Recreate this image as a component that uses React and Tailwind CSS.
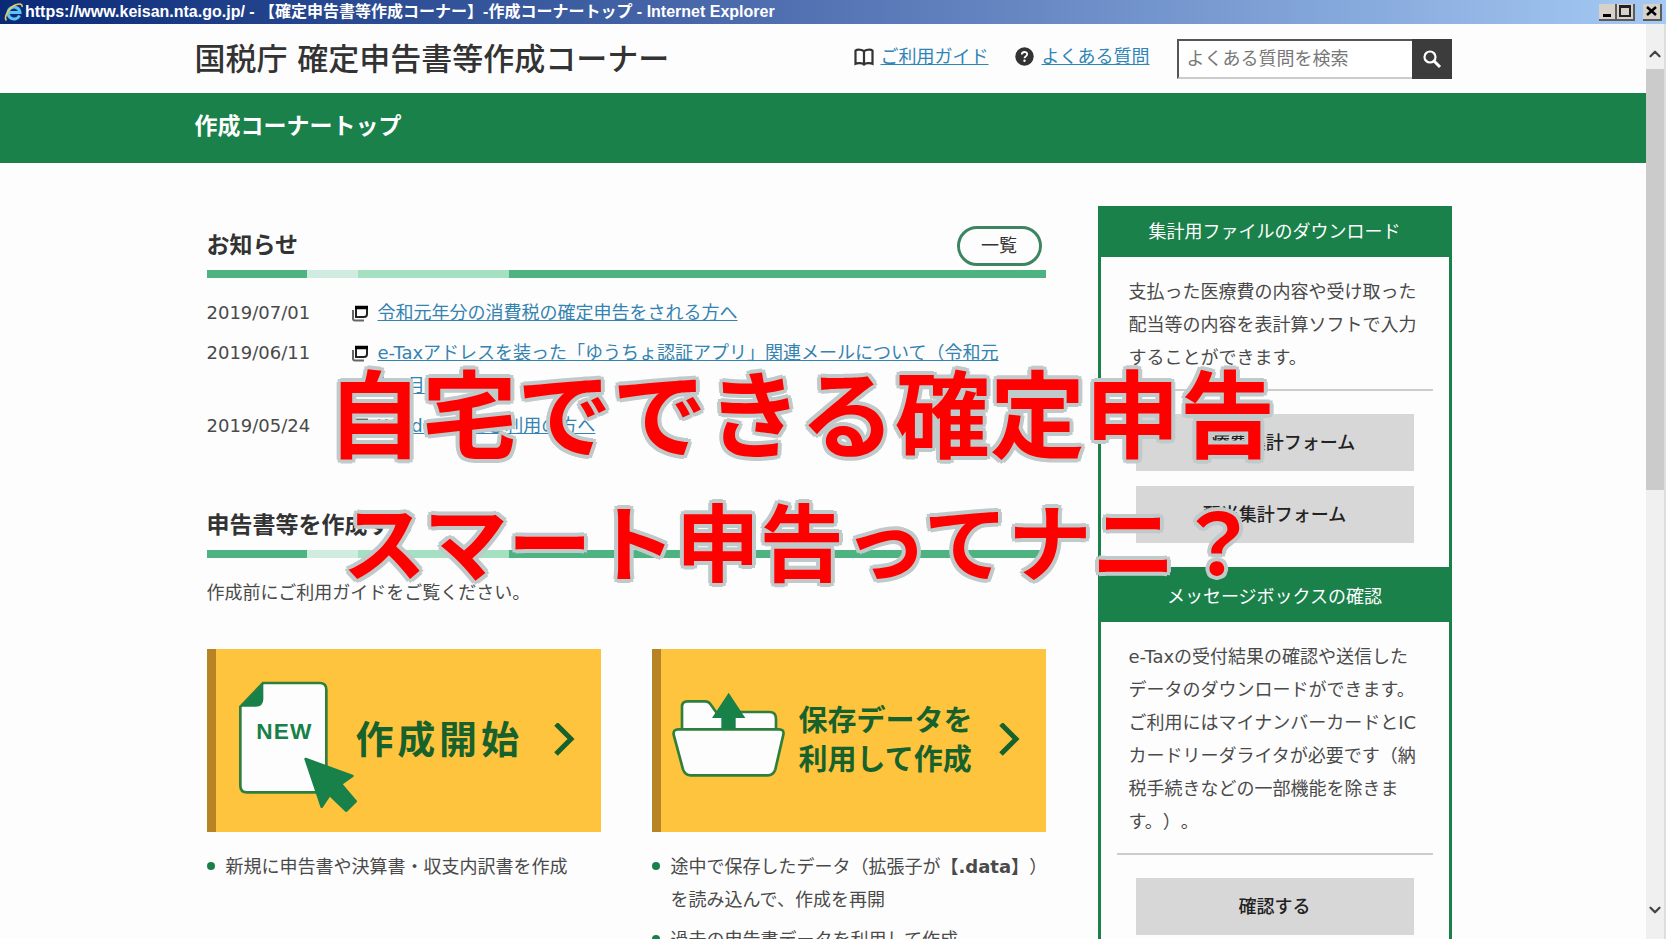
import React from 'react';
import { ChevronUp, ChevronDown } from 'lucide-react';

const news = [
    { date: '2019/07/01', title: '令和元年分の消費税の確定申告をされる方へ' },
    { date: '2019/06/11', title: 'e-Taxアドレスを装った「ゆうちょ認証アプリ」関連メールについて（令和元年6月）' },
    { date: '2019/05/24', title: 'Windows7をご利用の方へ' },
];

const IeIcon = () => (
    <svg width="20" height="20" viewBox="0 0 20 20" fill="none" aria-hidden="true">
        <path d="M15.5 13.5A6 6 0 1 1 16 10.500H5" stroke="#5cc3f5" strokeWidth="3" />
        <path d="M2.500 18.500C-1 15 6 4.500 12.500 2.500C16 1.300 18.500 2 18 5" stroke="#f2cf4a" strokeWidth="1.600" />
    </svg>
);

const BookIcon = () => (
    <svg width="20" height="18" viewBox="0 0 20 18" fill="none" stroke="#333" strokeWidth="2.200" aria-hidden="true">
        <path d="M10 3.500C9 1.300 3 1.300 1.500 2.500V15.800C3.500 14.800 8.500 14.800 10 16.500C11.500 14.800 16.500 14.800 18.500 15.800V2.500C17 1.300 11 1.300 10 3.500ZM10 4V16" />
    </svg>
);

const QuestionIcon = () => (
    <svg width="19" height="19" viewBox="0 0 19 19" aria-hidden="true">
        <circle cx="9.500" cy="9.500" r="9.200" fill="#333" />
        <path d="M6.800 7.500C6.800 4.200 12.200 4.200 12.200 7.300C12.200 9.300 9.500 9 9.500 11.300" fill="none" stroke="#fff" strokeWidth="1.800" />
        <circle cx="9.500" cy="13.800" r="1.200" fill="#fff" />
    </svg>
);

const SearchIcon = () => (
    <svg width="20" height="20" viewBox="0 0 20 20" fill="none" stroke="#fff" aria-hidden="true">
        <circle cx="8" cy="8" r="5.500" strokeWidth="2.200" />
        <path d="M12 12L18 18" strokeWidth="3" />
    </svg>
);

const WindowIcon = () => (
    <svg className="mt-[9px] shrink-0" width="18" height="17" viewBox="0 0 18 17" fill="none" aria-hidden="true">
        <path d="M2 5V13.500Q2 15.500 4 15.500H13" stroke="#666" strokeWidth="2" />
        <path d="M5 2.500H16V9Q16 12 13 12H5Z" stroke="#222" strokeWidth="2" />
        <path d="M4 2.500H17" stroke="#000" strokeWidth="3.500" />
    </svg>
);

const NewDocumentIcon = () => (
    <svg className="shrink-0 overflow-visible" width="110" height="146" viewBox="145 112 330 438" aria-hidden="true">
        <path d="M220 157H390Q410 157 410 177V465Q410 485 390 485H172Q152 485 152 465V228Z" fill="#fdfdfd" stroke="#2f7f3c" strokeWidth="8" />
        <path d="M221 160V205Q221 228 198 228H152Z" fill="#188049" />
        <text x="284" y="326" textAnchor="middle" fontSize="68" fontWeight="700" fill="#188049" className="font-['Liberation_Sans',sans-serif] tracking-wider">NEW</text>
        <path d="M348 385L488 436L454 460L498 512L470 540L420 492L396 528Z" fill="#188049" stroke="#188049" strokeWidth="8" strokeLinejoin="round" />
    </svg>
);

const FolderIcon = () => (
    <svg className="shrink-0" width="115" height="97" viewBox="120 186 345 291" aria-hidden="true">
        <path d="M153 300V230Q153 214 169 214H222Q232 214 238 222L255 246H415Q435 246 435 266V300Z" fill="#fdfdfd" stroke="#2f7f3c" strokeWidth="8" />
        <path d="M142 298H444Q460 298 457 314L433 418Q427 436 410 436H180Q162 436 156 418L128 314Q126 298 142 298Z" fill="#fdfdfd" stroke="#2f7f3c" strokeWidth="8" />
        <path d="M293 188L343 264H314V298H271V264H243Z" fill="#188049" />
    </svg>
);

const ArrowIcon = () => (
    <svg className="ml-auto shrink-0" width="22" height="36" viewBox="0 0 22 36" fill="none" aria-hidden="true">
        <path d="M3 1L18 16L3 31" stroke="#17612c" strokeWidth="5" />
    </svg>
);

const SectionHeading = ({ title, children }) => (
    <div>
        <div className="flex h-10 items-center justify-between pr-1">
            <h2 className="text-[23px] font-bold text-[#333]">{title}</h2>
            {children}
        </div>
        <div className="mt-1 flex h-2">
            <span className="w-[12%] bg-[#4db380]" />
            <span className="w-[6%] bg-[#d0ebdf]" />
            <span className="w-[18%] bg-[#a6e0c2]" />
            <span className="flex-1 bg-[#4db380]" />
        </div>
    </div>
);

const Bullet = ({ children }) => (
    <li className="flex gap-[11px]">
        <span className="mt-3 size-2 shrink-0 rounded-full bg-[#188049]" />
        <span>{children}</span>
    </li>
);

const SideBox = ({ title, text, buttons }) => (
    <section className="border-x-3 border-b-4 border-[#1a814a]">
        <h2 className="bg-[#1a814a] py-[9px] text-center text-lg leading-[33px] text-white">{title}</h2>
        <p className="px-7 pt-[18px] leading-[33px]">{text}</p>
        <hr className="mx-4 mt-[15px] border-t-2 border-[#ccc]" />
        <div className="flex flex-col gap-[15px] px-[35px] pt-[23px] pb-6">
            {buttons.map((label) => (
                <button key={label} type="button" className="h-[57px] bg-[#d7d7d7] font-medium text-[#222]">
                    {label}
                </button>
            ))}
        </div>
    </section>
);

const TitleBar = () => (
    <div className="flex h-6 shrink-0 items-center bg-linear-to-r from-[#0a2a78] via-[#5574b4] to-[#a6caf4] pr-1 pl-1">
        <IeIcon />
        <span className="ml-px font-['Liberation_Sans','Noto_Sans_CJK_JP',sans-serif] text-base font-bold whitespace-nowrap text-white">
            https://www.keisan.nta.go.jp/ - 【確定申告書等作成コーナー】-作成コーナートップ - Internet Explorer
        </span>
        <div className="ml-auto flex">
            <button type="button" aria-label="最小化" className="flex h-[17px] w-[18px] items-end justify-center border-r-2 border-b-2 border-[#5c5c5c] bg-[#d6d2ca] pb-0.5">
                <span className="h-[3px] w-2 bg-black" />
            </button>
            <button type="button" aria-label="最大化" className="flex h-[17px] w-[18px] items-center justify-center border-r-2 border-b-2 border-[#5c5c5c] bg-[#d6d2ca]">
                <span className="h-3 w-3 border-2 border-t-3 border-[#222]" />
            </button>
            <button type="button" aria-label="閉じる" className="ml-2 flex h-[17px] w-[19px] items-center justify-center border-r-2 border-b-2 border-[#5c5c5c] bg-[#d6d2ca]">
                <svg width="11" height="10" viewBox="0 0 11 10" stroke="#000" strokeWidth="2.500" aria-hidden="true">
                    <path d="M1 1L10 9M10 1L1 9" />
                </svg>
            </button>
        </div>
    </div>
);

const Header = () => (
    <header className="mx-auto flex h-[69px] w-full max-w-[1257px] items-center">
        <h1 className="pt-0.5 text-[31px] font-medium whitespace-nowrap text-[#333]">国税庁 確定申告書等作成コーナー</h1>
        <nav className="ml-auto flex items-center gap-[26px] pb-1 text-[#2f85b5]">
            <span className="flex items-center gap-[7px]">
                <BookIcon />
                <a href="#guide" className="underline">ご利用ガイド</a>
            </span>
            <span className="flex items-center gap-2">
                <QuestionIcon />
                <a href="#faq" className="underline">よくある質問</a>
            </span>
        </nav>
        <form className="ml-[27px] flex">
            <input
                type="text"
                aria-label="よくある質問を検索"
                placeholder="よくある質問を検索"
                className="h-10 w-[235px] border-2 border-r-0 border-t-[#555] border-b-[#ccc] border-l-[#555] bg-white px-2 placeholder:text-[#777]"
            />
            <button type="submit" aria-label="検索" className="flex h-10 w-10 items-center justify-center bg-[#3c3c3c]">
                <SearchIcon />
            </button>
        </form>
    </header>
);

const App = () => {
    return (
        <div className="relative flex h-screen flex-col overflow-hidden bg-[#fdfdfd] font-['DejaVu_Sans','Noto_Sans_CJK_JP',sans-serif] text-lg text-[#4a4a4a] [text-spacing-trim:space-all]" lang="ja">
            <TitleBar />
            <div className="flex min-h-0 flex-1">
                <div className="min-w-0 flex-1 overflow-hidden">
                    <Header />
                    <div className="bg-[#1a814a]">
                        <p className="mx-auto max-w-[1257px] pt-[13px] pb-[17px] text-[23px] leading-10 font-bold text-white">作成コーナートップ</p>
                    </div>

                    <div className="mx-auto flex max-w-[1257px] items-start pt-[43px]">
                        <main className="min-w-0 flex-1 pt-5 pr-[52px] pl-3">
                            <SectionHeading title="お知らせ">
                                <a href="#news" className="flex h-10 w-[85px] items-center justify-center rounded-full border-3 border-[#3c8560] text-[#333]">
                                    一覧
                                </a>
                            </SectionHeading>
                            <ul className="mt-[18px] flex flex-col gap-[7px] leading-[33px]">
                                {news.map((item) => (
                                    <li key={item.date} className="flex pr-[30px]">
                                        <span className="w-36 shrink-0">{item.date}</span>
                                        <WindowIcon />
                                        <a href="#news" className="ml-[9px] text-[#3583b0] underline">{item.title}</a>
                                    </li>
                                ))}
                            </ul>

                            <div className="mt-16">
                                <SectionHeading title="申告書等を作成する" />
                            </div>
                            <p className="mt-[18px] leading-[33px]">作成前にご利用ガイドをご覧ください。</p>

                            <div className="mt-10 grid grid-cols-2 gap-[51px]">
                                <div>
                                    <a href="#new" className="flex h-[183px] items-center border-l-9 border-[#b88324] bg-[#ffc43e] pr-[26px] pl-[22px] font-bold text-[#17612c]">
                                        <NewDocumentIcon />
                                        <span className="ml-2 text-[38px] tracking-widest">作成開始</span>
                                        <ArrowIcon />
                                    </a>
                                    <ul className="mt-[18px] flex flex-col gap-[7px] leading-[33px]">
                                        <Bullet>新規に申告書や決算書・収支内訳書を作成</Bullet>
                                    </ul>
                                </div>
                                <div>
                                    <a href="#saved" className="flex h-[183px] items-center border-l-9 border-[#b88324] bg-[#ffc43e] pr-[26px] pl-[10px] font-bold text-[#17612c]">
                                        <FolderIcon />
                                        <span className="ml-[13px] text-[29px] leading-[39px]">
                                            保存データを
                                            <br />
                                            利用して作成
                                        </span>
                                        <ArrowIcon />
                                    </a>
                                    <ul className="mt-[18px] -mr-3 flex flex-col gap-[7px] leading-[33px]">
                                        <Bullet>
                                            途中で保存したデータ（拡張子が<b>【.data】</b>）を読み込んで、作成を再開
                                        </Bullet>
                                        <Bullet>過去の申告書データを利用して作成</Bullet>
                                    </ul>
                                </div>
                            </div>
                        </main>

                        <aside className="w-[354px] shrink-0">
                            <SideBox
                                title="集計用ファイルのダウンロード"
                                text="支払った医療費の内容や受け取った配当等の内容を表計算ソフトで入力することができます。"
                                buttons={['医療費集計フォーム', '配当集計フォーム']}
                            />
                            <SideBox
                                title="メッセージボックスの確認"
                                text="e-Taxの受付結果の確認や送信したデータのダウンロードができます。ご利用にはマイナンバーカードとICカードリーダライタが必要です（納税手続きなどの一部機能を除きます。）。"
                                buttons={['確認する']}
                            />
                        </aside>
                    </div>
                </div>

                <div className="flex w-5 shrink-0 flex-col items-center border-r-2 border-[#dededa] bg-[#f0f0f0] text-[#444]">
                    <div className="flex h-[45px] items-end pb-1.5">
                        <ChevronUp size={18} strokeWidth={3} />
                    </div>
                    <div className="h-[46%] w-full bg-[#cbcbcb]" />
                    <ChevronDown className="mt-auto mb-5" size={18} strokeWidth={3} />
                </div>
            </div>

            <div className="pointer-events-none absolute inset-x-0 top-[358px] pr-16 text-center font-bold whitespace-nowrap text-[#fe0000] [paint-order:stroke_fill] [-webkit-text-stroke:4px_#e6cccc] [text-shadow:4px_0_#c0caca,-4px_0_#c0caca,0_4px_#c0caca,0_-4px_#c0caca,3px_3px_#c0caca,-3px_3px_#c0caca,3px_-3px_#c0caca,-3px_-3px_#c0caca]">
                <p className="text-[95px] leading-[120px]">自宅でできる確定申告</p>
                <p className="mt-2 text-[84px] leading-[120px]">スマート申告ってナニ？</p>
            </div>
        </div>
    );
};

export default App;
